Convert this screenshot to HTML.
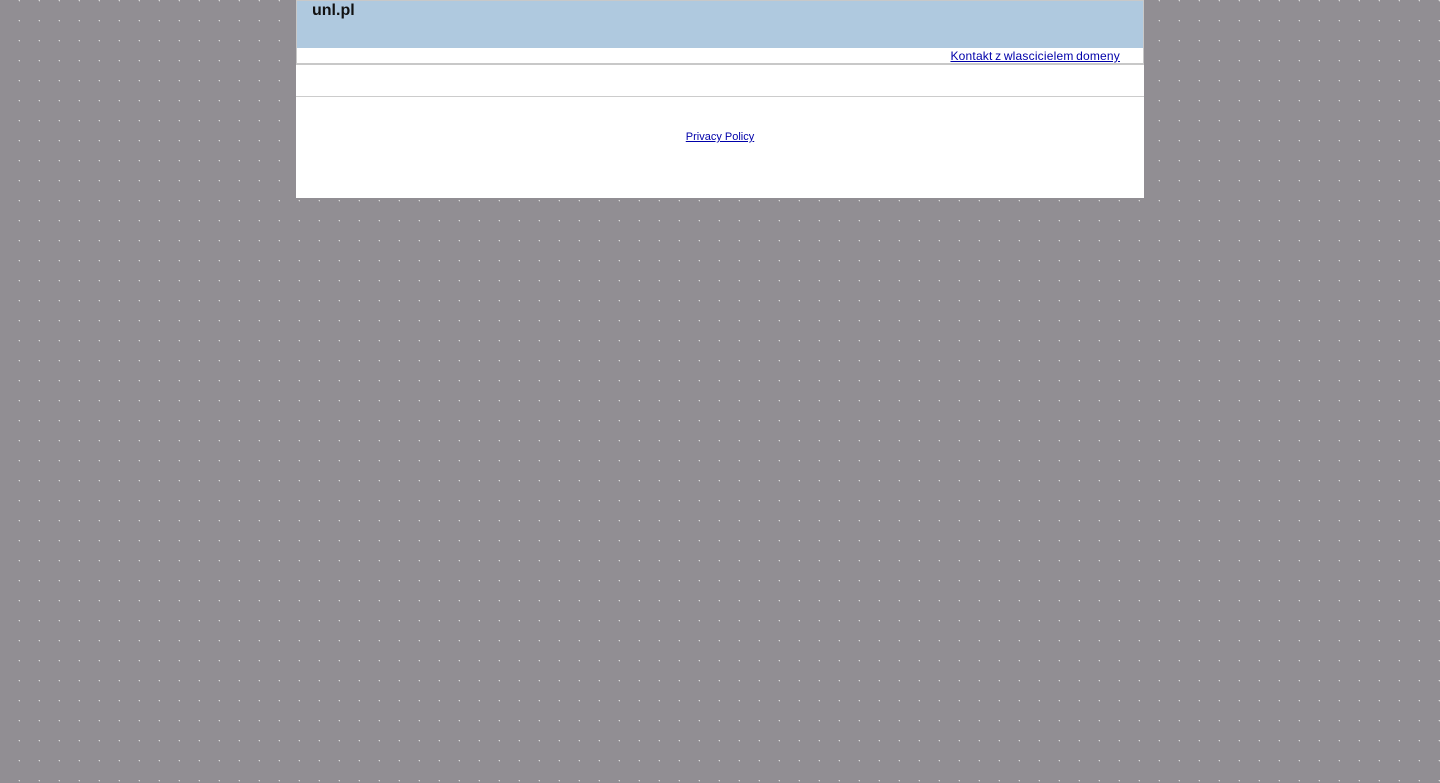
<!DOCTYPE html>
<html><head><style>
html,body{margin:0;padding:0;height:783px;overflow:hidden}
body{background-color:#918e93;background-image:radial-gradient(circle at 19.5px 0.5px,#d8d8d8 0.7px,transparent 1px);background-size:20px 20px;font-family:"Liberation Sans",Arial,sans-serif}
#w{position:absolute;left:296px;top:0;width:848px;height:198px;background:#fff}
#hd{position:absolute;left:0;top:0;width:846px;height:47px;background:#afc9df;border:1px solid #c8c8c8;border-bottom:0}
#hd span{position:absolute;left:15px;top:1px;font-size:16px;font-weight:bold;color:#111}
#row{position:absolute;left:0;top:48px;width:846px;height:15px;border:1px solid #c8c8c8;border-top:0;border-bottom:2px solid #c8c8c8}
#row a{position:absolute;right:23px;top:1px;font-size:12px;color:#00a;letter-spacing:0.2px;word-spacing:-1px}
#ln{position:absolute;left:0;top:96px;width:848px;height:1px;background:#ccc}
#pp{position:absolute;left:0;width:848px;top:131px;text-align:center;font-size:11px}
#pp a{color:#00a}
</style></head><body>
<div id="w">
<div id="hd"><span>unl.pl</span></div>
<div id="row"><a href="#">Kontakt z wlascicielem domeny</a></div>
<div id="ln"></div>
<div id="pp"><a href="#">Privacy Policy</a></div>
</div>
</body></html>
